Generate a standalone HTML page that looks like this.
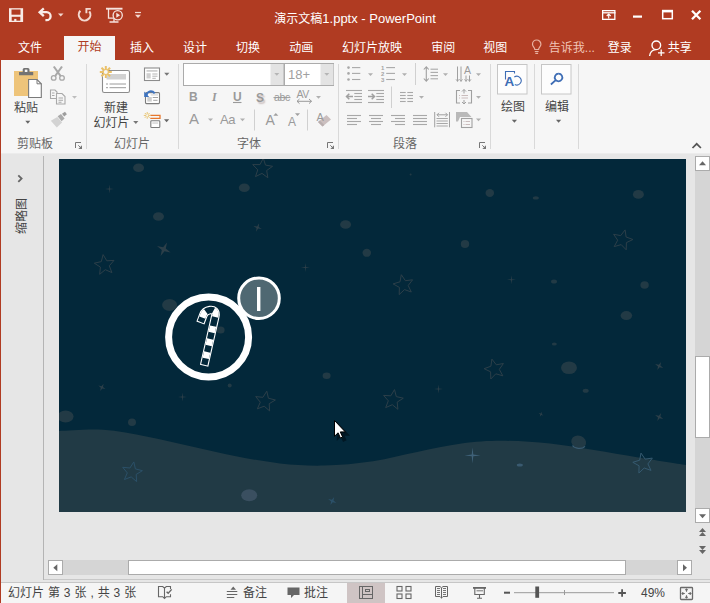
<!DOCTYPE html>
<html lang="zh-CN">
<head>
<meta charset="utf-8">
<title>演示文稿1.pptx - PowerPoint</title>
<style>
*{box-sizing:border-box;margin:0;padding:0}
html,body{width:710px;height:603px;overflow:hidden;background:#e6e6e6}
body{font-family:"Liberation Sans","Noto Sans CJK SC",sans-serif;font-size:13px;color:#444;position:relative}
.abs{position:absolute}
#titlebar{left:0;top:0;width:710px;height:60px;background:#b03b22}
#title{left:274.300px;top:10px;white-space:nowrap;color:#fff;font-size:13px;line-height:18px}
.tab{position:absolute;top:39px;height:18px;line-height:18px;color:#fff;font-size:12px;white-space:nowrap}
#tab-home{left:64px;top:36px;width:51px;height:24px;background:#f6f6f6;color:#b03b22;text-align:center;line-height:22px}
#ribbon{left:1px;top:60px;width:709px;height:94px;background:#f6f6f6;border-bottom:1px solid #ececec}
.glabel{position:absolute;top:136px;font-size:12px;line-height:16px;color:#666;white-space:nowrap}
.gsep{position:absolute;top:64px;width:1px;height:85px;background:#d9d9d9}
#work{left:1px;top:154px;width:709px;height:426px;background:#e6e6e6}
#leftpane{left:1px;top:156px;width:43px;height:424px;background:#e6e6e6;border-right:1px solid #b4b4b4}
#slide{left:59px;top:159px;width:627px;height:353px;background:#03283a;overflow:hidden}
#status{left:1px;top:583px;width:709px;height:20px;background:#f5f5f5}
.st{position:absolute;top:585px;font-size:12px;line-height:16px;color:#444;white-space:nowrap;word-spacing:0.600px}
#redleft{left:0;top:60px;width:1px;height:543px;background:#b03b22}

.btxt{position:absolute;text-align:center;font-size:12px;line-height:16px;color:#444;white-space:nowrap}
.ftxt{position:absolute;line-height:16px;color:#9a9a9a;white-space:nowrap}
#thumbtxt{left:4px;top:208px;width:36px;height:16px;line-height:16px;font-size:12px;color:#444;text-align:center;transform:rotate(-90deg);white-space:nowrap}
</style>
</head>
<body>
<div id="titlebar" class="abs"></div>
<div id="title" class="abs"><span style="font-size:12px">演示文稿</span>1.pptx - PowerPoint</div>
<div class="tab" style="left:18.1px">文件</div>
<div class="tab" id="tab-home">开始</div>
<div class="tab" style="left:130.1px">插入</div>
<div class="tab" style="left:183.1px">设计</div>
<div class="tab" style="left:236.1px">切换</div>
<div class="tab" style="left:289.3px">动画</div>
<div class="tab" style="left:342.1px">幻灯片放映</div>
<div class="tab" style="left:431.3px">审阅</div>
<div class="tab" style="left:483.3px">视图</div>
<div class="tab" style="left:548.8px;color:#f0c5b8">告诉我...</div>
<div class="tab" style="left:607.8px">登录</div>
<div class="tab" style="left:667.8px">共享</div>
<svg class="abs" style="left:0;top:0" width="710" height="60" viewBox="0 0 710 60" fill="none" stroke="#fff">
<!-- save -->
<rect x="9" y="8.200" width="14.100" height="13.800" fill="#f8ebe7" stroke="none"/>
<rect x="11.500" y="9.500" width="9" height="5.200" fill="#b03b22" stroke="none"/>
<rect x="11.700" y="16.800" width="8.600" height="3.900" fill="#b03b22" stroke="none"/>
<rect x="14.200" y="18.900" width="2.200" height="2.200" fill="#f8ebe7" stroke="none"/>
<!-- undo -->
<path d="M39.800 12.200h6.800a4 4 0 0 1 0 8h-1.200" stroke-width="2.300" stroke="#f8ebe7"/>
<path d="M43.800 8.300l-4.200 3.900l4.200 3.900" stroke-width="2.300" stroke="#f8ebe7"/>
<path d="M58 13.500h5.500l-2.750 3z" fill="#f3d8d0" stroke="none"/>
<!-- redo/repeat -->
<path d="M80.300 10.800A5.800 5.800 0 1 0 89.300 11.300" stroke-width="2.100" stroke="#f3d8d0"/>
<path d="M90.800 8.900H86.400V13.300" stroke-width="1.900" stroke="#f3d8d0"/>
<!-- slideshow -->
<g stroke="#f6e4df" stroke-width="1.300">
<path d="M106 8.700h16.500" stroke-width="1.900"/>
<path d="M108.500 8.600v9.500h5.500"/>
<path d="M114 18.500v3.500M109.500 22h9"/>
<circle cx="117.700" cy="15.300" r="4.600"/>
</g>
<path d="M116.300 12.800l3.800 2.500l-3.800 2.500z" fill="#f6e4df" stroke="none"/>
<!-- customize -->
<path d="M135 12.500h6" stroke="#f3d8d0" stroke-width="1.200"/>
<path d="M135 14.800h6l-3 3.200z" fill="#f3d8d0" stroke="none"/>
<!-- ribbon display options -->
<g stroke="#fff" stroke-width="1.300">
<rect x="602.650" y="10.650" width="12.200" height="8.700"/>
<path d="M602 12.800h13.500"/>
<path d="M608.700 18.500v-4M606.700 16l2-2l2 2" stroke-width="1.100"/>
</g>
<!-- minimize -->
<rect x="633" y="15.500" width="9" height="2.200" fill="#fff" stroke="none"/>
<!-- maximize -->
<rect x="662.700" y="11" width="9.600" height="7.700" stroke-width="1.500"/>
<rect x="662" y="9.800" width="11" height="2.600" fill="#fff" stroke="none"/>
<!-- close -->
<path d="M692 10.800l8.400 8.400M700.400 10.800l-8.400 8.400" stroke-width="2.300"/>
<!-- lightbulb -->
<g stroke="#e8b2a2" stroke-width="1.200">
<path d="M534.800 49.500c0 -2 -2.300 -2.800 -2.300 -5.300a4.200 4.200 0 0 1 8.400 0c0 2.500 -2.300 3.300 -2.300 5.300z"/>
<path d="M534.800 51.500h3.800M535.300 53.300h2.800"/>
</g>
<!-- share person -->
<g stroke="#fff" stroke-width="1.400">
<circle cx="656.300" cy="45.300" r="4.300"/>
<path d="M649.600 56c0.500 -3.800 3 -6.200 6.300 -6.400"/>
<path d="M661.200 49.500v6.500M658 52.800h6.500" stroke-width="1.300"/>
</g>
</svg>
<div id="ribbon" class="abs"></div>
<!--R1-->
<svg class="abs" style="left:0;top:60px" width="710" height="94" viewBox="0 60 710 94" fill="none">
<rect x="14" y="71" width="24" height="25" fill="#eec47a"/>
<path d="M19 75.200v-3.200h3.700v-2.400a1.600 1.600 0 0 1 1.600 -1.600h3.600a1.600 1.600 0 0 1 1.600 1.600v2.400h3.700v3.200z" fill="#737373"/>
<rect x="24.800" y="69.600" width="2.600" height="2.400" fill="#f6f6f6"/>
<path d="M28.600 79.500h8.400l4.300 4.300v13.700h-12.700z" fill="#fff" stroke="#7a7a7a" stroke-width="1.100"/>
<path d="M37 79.500v4.300h4.300" stroke="#7a7a7a" stroke-width="1"/>
<path d="M25.3 120.8h5l-2.5 3z" fill="#666" stroke="none"/>
<g stroke="#a8a8a8" stroke-width="1.500"><path d="M53.800 66.500l6.800 9.500M62 66.500l-6.800 9.500" stroke-width="2.100"/><circle cx="53.700" cy="77.900" r="2.300" stroke-width="1.300"/><circle cx="62" cy="77.900" r="2.300" stroke-width="1.300"/></g>
<g stroke="#a8a8a8" stroke-width="1.100"><path d="M56 98.500h-5.500v-8.500h4.500l2 2v1.500"/><path d="M56.500 93.500h5.500l3 3v7.500h-8.500z" fill="#f6f6f6"/>
<path d="M52 93h2.500M52 95.500h2.500M58.500 98h4.500M58.500 100.200h4.500M58.500 102.200h3"/></g>
<path d="M72 96h5l-2.5 2.8z" fill="#bdbdbd" stroke="none"/>
<path d="M50.800 120.800l6.500 -3.800l4.800 5.600l-5.300 4.800z" fill="#d3d3d3"/>
<path d="M57.600 116.200l3.400 -2.100l3.600 4.400l-3 2.700z" fill="#ababab"/>
<path d="M62 113.700l3 -1.900l1.900 2.400l-2.700 2.300z" fill="#9d9d9d"/>
<rect x="102.500" y="70.500" width="27" height="22" rx="1.800" fill="#fff" stroke="#8c8c8c" stroke-width="1.100"/>
<rect x="106.500" y="74" width="19.500" height="5.500" fill="#d2d2d2"/>
<path d="M106 84h2M109.500 84H126M106 87.700h2M109.500 87.700H126" stroke="#9a9a9a" stroke-width="1"/>
<g stroke="#eac16a" stroke-width="2"><path d="M105.800 66v12M99.800 72h12M101.500 67.700l8.600 8.600M110.100 67.700l-8.600 8.600"/></g>
<circle cx="105.800" cy="72" r="2" fill="#f6f6f6"/>
<path d="M133.2 121h5.2l-2.6 3z" fill="#777" stroke="none"/>
<rect x="144.500" y="68" width="15" height="12.500" fill="#fff" stroke="#8c8c8c" stroke-width="1.100"/>
<rect x="146.500" y="70" width="11" height="1.800" fill="#cfcfcf"/>
<rect x="146.500" y="73.200" width="4.200" height="5.300" fill="#cfcfcf"/>
<path d="M152.300 74h5.200M152.300 76.200h5.200M152.300 78.300h3.500" stroke="#aaa" stroke-width="0.900"/>
<path d="M164.2 72.8h5.2l-2.6 3z" fill="#777" stroke="none"/>
<rect x="145.500" y="92.600" width="14" height="11" rx="1" fill="#fff" stroke="#7d7d7d" stroke-width="1.100"/>
<rect x="147.300" y="97" width="4.500" height="4.600" fill="#cfcfcf"/><rect x="150.700" y="94.200" width="7.300" height="1.400" fill="#dcdcdc"/>
<path d="M152.700 97.500h5.300M153.200 100.300h4.300" stroke="#999" stroke-width="0.900"/>
<path d="M146.300 95.500c1 -4.500 5.500 -5.800 8.400 -2.200" stroke="#3e74c0" stroke-width="2"/>
<path d="M144.200 91.500v5.400h5z" fill="#3e74c0"/>
<path d="M150.300 115.400h9.700v3h-9.700" stroke="#e6772e" stroke-width="1.300"/>
<rect x="150.800" y="120.800" width="9" height="6.700" rx="0.800" fill="#fff" stroke="#7d7d7d" stroke-width="1.100"/>
<rect x="152.300" y="122.300" width="5.800" height="1.500" fill="#d6d6d6"/>
<g stroke="#e9c46f" stroke-width="1"><path d="M147.200 112v6.800M143.800 115.400h6.800M144.800 113l4.800 4.800M149.600 113l-4.800 4.800"/></g>
<circle cx="147.200" cy="115.400" r="1.100" fill="#f6f6f6"/>
<path d="M164.0 119.2h5.2l-2.6 3z" fill="#666" stroke="none"/>
<!-- ---- dialog launchers -->
<path d="M75.5 148V142.500H81" stroke="#777" stroke-width="1"/><path d="M78.300 145.300l3.200 3.200" stroke="#777" stroke-width="1"/><path d="M82 145.300V149H78.300z" fill="#777"/>
<path d="M327.5 148V142.500H333" stroke="#777" stroke-width="1"/><path d="M330.300 145.300l3.200 3.200" stroke="#777" stroke-width="1"/><path d="M334 145.300V149H330.300z" fill="#777"/>
<path d="M479.5 148V142.500H485" stroke="#777" stroke-width="1"/><path d="M482.300 145.300l3.200 3.200" stroke="#777" stroke-width="1"/><path d="M486 145.300V149H482.300z" fill="#777"/>
<path d="M692.500 148l4.200 -4.200l4.200 4.200" stroke="#555" stroke-width="1.700"/>
</svg>
<!--/R1-->
<!--R2-->
<svg class="abs" style="left:0;top:60px" width="710" height="94" viewBox="0 60 710 94" fill="none">
<rect x="183.500" y="63.500" width="100" height="22" fill="#fff" stroke="#ababab"/>
<rect x="270.500" y="64" width="13" height="21" fill="#e3e3e3"/>
<rect x="284.500" y="63.500" width="49" height="22" fill="#fff" stroke="#ababab"/>
<rect x="320.500" y="64" width="13" height="21" fill="#e3e3e3"/>
<path d="M274.3 73h5l-2.5 2.8z" fill="#b5b5b5" stroke="none"/>
<path d="M324.3 73h5l-2.5 2.8z" fill="#b5b5b5" stroke="none"/>
<path d="M233 102.5H241.5" stroke="#9a9a9a" stroke-width="1.1"/>
<path d="M273.5 97.6H290.5" stroke="#9a9a9a" stroke-width="1"/>
<path d="M297 101.300h14.500M299.500 99l-2.500 2.300l2.500 2.300M309 99l2.500 2.300l-2.500 2.300" stroke="#9a9a9a" stroke-width="1"/>
<path d="M316 96h5l-2.5 2.8z" fill="#b0b0b0" stroke="none"/>
<path d="M208 118.5h5l-2.5 2.8z" fill="#b0b0b0" stroke="none"/>
<path d="M240 118.5h5l-2.5 2.8z" fill="#b0b0b0" stroke="none"/>
<path d="M254.500 109.500V130.500M307.500 109.500V130.500" stroke="#d0d0d0"/>
<path d="M273.300 115.800h5l-2.500 -2.800z" fill="#a0a0a0"/>
<path d="M295 113.200h5l-2.500 2.800z" fill="#a0a0a0"/>
<path d="M318 122l8.500 -7l4.500 4.500l-8.500 7z" fill="#cbbfbf"/>
<path d="M318 122l1.800 -1.500l4.500 4.500l-1.800 1.500z" fill="#b9aeae"/>
<circle cx="348.500" cy="67.6" r="1.300" fill="#a8a8a8"/>
<path d="M352 67.6H360.3" stroke="#a8a8a8" stroke-width="1.1"/>
<circle cx="348.500" cy="73.4" r="1.300" fill="#a8a8a8"/>
<path d="M352 73.4H360.3" stroke="#a8a8a8" stroke-width="1.1"/>
<circle cx="348.500" cy="79.5" r="1.300" fill="#a8a8a8"/>
<path d="M352 79.5H360.3" stroke="#a8a8a8" stroke-width="1.1"/>
<path d="M368 73.3h5l-2.5 2.8z" fill="#b0b0b0" stroke="none"/>
<path d="M386.2 67.6H395" stroke="#a8a8a8" stroke-width="1.1"/>
<path d="M386.2 73.4H395" stroke="#a8a8a8" stroke-width="1.1"/>
<path d="M386.2 79.5H395" stroke="#a8a8a8" stroke-width="1.1"/>
<path d="M402 73.3h5l-2.5 2.8z" fill="#b0b0b0" stroke="none"/>
<path d="M415.500 63V85M391.500 86.500V108" stroke="#d0d0d0"/>
<path d="M426.300 67v14M423.800 69.500l2.500 -2.700l2.500 2.700M423.800 78.500l2.500 2.700l2.500 -2.700" stroke="#a0a0a0" stroke-width="1.100"/>
<path d="M430.5 69.2H438" stroke="#a8a8a8" stroke-width="1.1"/>
<path d="M430.5 72.4H438" stroke="#a8a8a8" stroke-width="1.1"/>
<path d="M430.5 75.6H438" stroke="#a8a8a8" stroke-width="1.1"/>
<path d="M430.5 78.8H438" stroke="#a8a8a8" stroke-width="1.1"/>
<path d="M443 73.3h5l-2.5 2.8z" fill="#b0b0b0" stroke="none"/>
<path d="M457.500 66.500V81.500M461 66.500V81.500M466 75.500V81.500M469.500 75.500V81.500" stroke="#a0a0a0" stroke-width="1"/>
<path d="M456 79.300l1.500 2l1.500 -2M459.500 79.300l1.500 2l1.500 -2M464.500 79.300l1.500 2l1.500 -2M468 79.300l1.500 2l1.500 -2" stroke="#a0a0a0" stroke-width="0.900"/>
<path d="M476 73.3h5l-2.5 2.8z" fill="#b0b0b0" stroke="none"/>
<path d="M346 90.5H362" stroke="#a8a8a8" stroke-width="1.1"/><path d="M346 102.5H362" stroke="#a8a8a8" stroke-width="1.1"/><path d="M354.3 93.5H362" stroke="#a8a8a8" stroke-width="1.1"/><path d="M354.3 96.5H362" stroke="#a8a8a8" stroke-width="1.1"/><path d="M354.3 99.5H362" stroke="#a8a8a8" stroke-width="1.1"/><path d="M346.5 96.500h6.500M349.3 93.700l-2.800 2.800l2.800 2.800" stroke="#a0a0a0" stroke-width="1.500"/>
<path d="M368 90.5H384" stroke="#a8a8a8" stroke-width="1.1"/><path d="M368 102.5H384" stroke="#a8a8a8" stroke-width="1.1"/><path d="M376.3 93.5H384" stroke="#a8a8a8" stroke-width="1.1"/><path d="M376.3 96.5H384" stroke="#a8a8a8" stroke-width="1.1"/><path d="M376.3 99.5H384" stroke="#a8a8a8" stroke-width="1.1"/><path d="M368 96.500h6.500M371.7 93.700l2.800 2.800l-2.800 2.800" stroke="#a0a0a0" stroke-width="1.500"/>
<path d="M400 92.5H405.7" stroke="#a8a8a8" stroke-width="1.1"/>
<path d="M407.3 92.5H413" stroke="#a8a8a8" stroke-width="1.1"/>
<path d="M400 95.5H405.7" stroke="#a8a8a8" stroke-width="1.1"/>
<path d="M407.3 95.5H413" stroke="#a8a8a8" stroke-width="1.1"/>
<path d="M400 98.5H405.7" stroke="#a8a8a8" stroke-width="1.1"/>
<path d="M407.3 98.5H413" stroke="#a8a8a8" stroke-width="1.1"/>
<path d="M400 101.5H405.7" stroke="#a8a8a8" stroke-width="1.1"/>
<path d="M407.3 101.5H413" stroke="#a8a8a8" stroke-width="1.1"/>
<path d="M419 96h5l-2.5 2.8z" fill="#b0b0b0" stroke="none"/>
<path d="M460 90.500h-3.500v12.500h3.500M468 90.500h3.500v12.500h-3.500" stroke="#a0a0a0" stroke-width="1.100"/>
<path d="M464 89.500v4M462 91.500l2 -2l2 2M464 104v-4M462 102l2 2l2 -2" stroke="#a0a0a0" stroke-width="1"/>
<path d="M459 95.500h1M461.500 95.500h6.500M459 98h1M461.500 98h6.500" stroke="#c5b5b5" stroke-width="0.900"/>
<path d="M476 96h5l-2.5 2.8z" fill="#b0b0b0" stroke="none"/>
<path d="M347 115.5H361" stroke="#a8a8a8" stroke-width="1.1"/><path d="M347 118.5H357" stroke="#a8a8a8" stroke-width="1.1"/><path d="M347 121.5H361" stroke="#a8a8a8" stroke-width="1.1"/><path d="M347 124.5H357" stroke="#a8a8a8" stroke-width="1.1"/>
<path d="M369 115.5H383" stroke="#a8a8a8" stroke-width="1.1"/><path d="M371 118.5H381" stroke="#a8a8a8" stroke-width="1.1"/><path d="M369 121.5H383" stroke="#a8a8a8" stroke-width="1.1"/><path d="M371 124.5H381" stroke="#a8a8a8" stroke-width="1.1"/>
<path d="M391 115.5H405" stroke="#a8a8a8" stroke-width="1.1"/><path d="M395 118.5H405" stroke="#a8a8a8" stroke-width="1.1"/><path d="M391 121.5H405" stroke="#a8a8a8" stroke-width="1.1"/><path d="M395 124.5H405" stroke="#a8a8a8" stroke-width="1.1"/>
<path d="M413 115.5H427" stroke="#a8a8a8" stroke-width="1.1"/><path d="M413 118.5H427" stroke="#a8a8a8" stroke-width="1.1"/><path d="M413 121.5H427" stroke="#a8a8a8" stroke-width="1.1"/><path d="M413 124.5H427" stroke="#a8a8a8" stroke-width="1.1"/>
<path d="M434.700 112V127.300M449.500 112V127.300" stroke="#a0a0a0" stroke-width="1"/>
<path d="M437 114.800h10.500M439 112.800l-2 2l2 2M445.500 112.800l2 2l-2 2" stroke="#a0a0a0" stroke-width="1"/>
<path d="M436.5 118.5H447.8" stroke="#a8a8a8" stroke-width="1"/>
<path d="M436.5 121H447.8" stroke="#a8a8a8" stroke-width="1"/>
<path d="M436.5 123.5H447.8" stroke="#a8a8a8" stroke-width="1"/>
<path d="M436.5 126H447.8" stroke="#a8a8a8" stroke-width="1"/>
<path d="M456 112h11l4.500 5h-11.500l-2 4.500h-2z" fill="#b9b9b9"/>
<rect x="461.500" y="118.500" width="10.500" height="9" fill="#f6f6f6" stroke="#a0a0a0" stroke-width="1.100"/>
<path d="M463.500 121.500h1M465.500 121.500h4.500M463.500 124.500h1M465.500 124.500h4.500" stroke="#c5b5b5" stroke-width="0.900"/>
<path d="M476 118.5h5l-2.5 2.8z" fill="#b0b0b0" stroke="none"/>
<rect x="497.500" y="64.500" width="29.500" height="29.500" fill="#fdfdfd" stroke="#c6c6c6"/>
<rect x="541.500" y="64.500" width="29.500" height="29.500" fill="#fdfdfd" stroke="#c6c6c6"/>
<path d="M505.500 79.500v-8h9v2" stroke="#3e6db5" stroke-width="1.100"/>
<path d="M514.300 77a4.400 4.400 0 1 1 0.500 7.600" stroke="#3e6db5" stroke-width="1.100"/>
<path d="M558.500 73.700a3.800 3.800 0 1 0 0.100 0M555.700 80.200l-4.800 4.300" stroke="#3e6db5" stroke-width="1.800"/>
<path d="M511.8 119.7h5.2l-2.6 3z" fill="#666" stroke="none"/>
<path d="M556 119.7h5.2l-2.6 3z" fill="#666" stroke="none"/>
</svg>
<!--/R2-->

<div class="btxt" style="left:6px;top:100px;width:40px">粘贴</div>
<div class="btxt" style="left:86px;top:100px;width:60px">新建</div>
<div class="btxt" style="left:83px;top:114.500px;width:57px">幻灯片</div>
<div class="btxt" style="left:492.500px;top:99px;width:41px">绘图</div>
<div class="btxt" style="left:536.500px;top:99px;width:41px">编辑</div>
<div class="ftxt" style="left:288px;top:67px;font-size:13px;color:#a0a0a0">18+</div>
<div class="ftxt" style="left:189px;top:89px;font-weight:bold;font-size:12px">B</div>
<div class="ftxt" style="left:212px;top:89px;font-weight:bold;font-style:italic;font-size:12px;font-family:'Liberation Serif',serif">I</div>
<div class="ftxt" style="left:233px;top:89px;font-weight:bold;font-size:12px">U</div>
<div class="ftxt" style="left:256px;top:89.500px;font-weight:bold;font-size:12px;text-shadow:1.500px 1.500px 1.500px #cbbfbf">S</div>
<div class="ftxt" style="left:274px;top:89px;font-size:10.500px;letter-spacing:-0.400px">abc</div>
<div class="ftxt" style="left:296.500px;top:85.500px;font-size:10.500px;letter-spacing:-0.500px">AV</div>
<div class="ftxt" style="left:189px;top:110.500px;font-size:15px">A</div>
<div class="ftxt" style="left:220px;top:112px;font-size:13px;letter-spacing:-0.500px">Aa</div>
<div class="ftxt" style="left:265.500px;top:112px;font-size:14px">A</div>
<div class="ftxt" style="left:288px;top:114px;font-size:12px">A</div>
<div class="ftxt" style="left:316.500px;top:108.500px;font-size:11px">A</div>
<div class="ftxt" style="left:381px;top:65px;font-size:6px;line-height:6px;font-weight:bold;width:6px;color:#a4a4a4">1<br>2<br>3</div>
<div class="ftxt" style="left:464px;top:61.500px;font-size:10.500px;">A</div>
<div class="ftxt" style="left:504.600px;top:73.500px;font-size:13.500px;font-weight:bold;color:#3e6db5">A</div>
<div class="glabel" style="left:17px">剪贴板</div>
<div class="glabel" style="left:114px">幻灯片</div>
<div class="glabel" style="left:237px">字体</div>
<div class="glabel" style="left:393px">段落</div>
<div class="gsep" style="left:86px"></div>
<div class="gsep" style="left:178px"></div>
<div class="gsep" style="left:338px"></div>
<div class="gsep" style="left:490px"></div>
<div class="gsep" style="left:534px"></div>
<div class="gsep" style="left:578px"></div>
<div id="work" class="abs"></div>
<div id="leftpane" class="abs"></div>
<!--SLIDE-->
<svg class="abs" style="left:59px;top:159px" width="627" height="353" viewBox="59 159 627 353" fill="none">
<rect x="59" y="159" width="627" height="353" fill="#03283a"/>
<ellipse cx="138.6" cy="167.8" rx="5.5" ry="4.3" fill="#223a45"/>
<ellipse cx="244.3" cy="187.7" rx="5.5" ry="4.3" fill="#223a45"/>
<ellipse cx="158.5" cy="216.5" rx="5.5" ry="4.3" fill="#223a45"/>
<ellipse cx="345.6" cy="224.5" rx="5.5" ry="4.3" fill="#223a45"/>
<ellipse cx="366.8" cy="252.8" rx="4.3" ry="4" fill="#223a45"/>
<ellipse cx="169.6" cy="305" rx="7.5" ry="6" fill="#223a45"/>
<ellipse cx="410.6" cy="174.5" rx="1" ry="1" fill="#223a45"/>
<ellipse cx="489.8" cy="193" rx="4.3" ry="4" fill="#223a45"/>
<ellipse cx="535.8" cy="197.9" rx="3" ry="1.6" fill="#223a45"/>
<ellipse cx="638.4" cy="194.4" rx="5.5" ry="4.3" fill="#223a45"/>
<ellipse cx="465" cy="244" rx="4.2" ry="4" fill="#223a45"/>
<ellipse cx="554" cy="281.5" rx="3" ry="2" fill="#223a45"/>
<ellipse cx="644.6" cy="285" rx="4.2" ry="3.8" fill="#223a45"/>
<ellipse cx="626.4" cy="315.6" rx="5.8" ry="4.5" fill="#223a45"/>
<ellipse cx="229.7" cy="385.5" rx="2" ry="2" fill="#223a45"/>
<ellipse cx="326.6" cy="375.8" rx="4" ry="3.2" fill="#223a45"/>
<ellipse cx="65.6" cy="416.5" rx="8" ry="6" fill="#223a45"/>
<ellipse cx="132" cy="422.2" rx="4" ry="3.8" fill="#223a45"/>
<ellipse cx="554.3" cy="344" rx="2.5" ry="1.5" fill="#223a45"/>
<ellipse cx="569" cy="367.8" rx="8" ry="6.3" fill="#223a45"/>
<ellipse cx="585.7" cy="390.8" rx="3" ry="2" fill="#223a45"/>
<ellipse cx="220.600" cy="330" rx="4" ry="3.600" fill="#223a45"/>
<polygon points="263.3,158.2 265.5,165.1 272.6,166.3 266.7,170.5 267.8,177.7 262.0,173.4 255.5,176.6 257.8,169.8 252.7,164.6 260.0,164.6" stroke="#2c3f49" stroke-width="1"/>
<polygon points="103.1,254.6 106.8,260.8 114.0,260.4 109.3,265.8 111.9,272.6 105.3,269.7 99.7,274.3 100.4,267.1 94.3,263.2 101.3,261.6" stroke="#2c3f49" stroke-width="1"/>
<polygon points="625.1,229.9 626.1,237.0 632.9,239.5 626.4,242.6 626.2,249.8 621.2,244.6 614.2,246.6 617.7,240.2 613.6,234.3 620.7,235.6" stroke="#2c3f49" stroke-width="1"/>
<polygon points="401.3,274.7 405.4,280.7 412.6,279.8 408.2,285.5 411.3,292.0 404.5,289.6 399.2,294.6 399.4,287.4 393.1,283.9 400.0,281.8" stroke="#2c3f49" stroke-width="1"/>
<polygon points="266.8,391.2 268.4,398.2 275.4,400.0 269.2,403.7 269.6,410.9 264.2,406.2 257.4,408.8 260.3,402.2 255.7,396.6 262.9,397.3" stroke="#2c3f49" stroke-width="1"/>
<polygon points="491.9,359.1 496.3,364.8 503.4,363.5 499.3,369.4 502.8,375.8 495.8,373.8 490.8,379.0 490.6,371.8 484.1,368.7 490.9,366.2" stroke="#2c3f49" stroke-width="1"/>
<polygon points="394.5,389.6 396.3,396.6 403.3,398.2 397.2,402.1 397.9,409.3 392.3,404.7 385.7,407.6 388.3,400.8 383.6,395.4 390.8,395.8" stroke="#2c3f49" stroke-width="1"/>
<polygon points="259.1,223.3 258.7,227.0 261.8,229.0 258.1,228.6 256.1,231.7 256.5,228.0 253.4,226.0 257.1,226.4" fill="#2c3f49"/>
<polygon points="167.0,242.4 165.8,248.5 170.6,252.4 164.5,251.2 160.6,256.0 161.8,249.9 157.0,246.0 163.1,247.2" fill="#2c3f49"/>
<polygon points="103.6,383.7 103.0,386.9 105.5,389.0 102.3,388.4 100.2,390.9 100.8,387.7 98.3,385.6 101.5,386.2" fill="#2c3f49"/>
<polygon points="661.1,361.9 660.4,365.6 663.3,367.9 659.6,367.2 657.3,370.1 658.0,366.4 655.1,364.1 658.8,364.8" fill="#2c3f49"/>
<polygon points="661.1,412.9 660.4,416.6 663.3,418.9 659.6,418.2 657.3,421.1 658.0,417.4 655.1,415.1 658.8,415.8" fill="#2c3f49"/>
<polygon points="542.2,411.8 541.7,414.0 543.5,415.5 541.3,415.0 539.8,416.8 540.3,414.6 538.5,413.1 540.7,413.6" fill="#2c3f49"/>
<polygon points="109.4,184.5 109.9,188.5 113.9,189.0 109.9,189.5 109.4,193.5 108.9,189.5 104.9,189.0 108.9,188.5" fill="#2c3f49"/>
<polygon points="305.4,262.9 305.9,266.9 309.9,267.4 305.9,267.9 305.4,271.9 304.9,267.9 300.9,267.4 304.9,266.9" fill="#2c3f49"/>
<polygon points="511.4,275.2 511.9,279.2 515.9,279.7 511.9,280.2 511.4,284.2 510.9,280.2 506.9,279.7 510.9,279.2" fill="#2c3f49"/>
<polygon points="182.4,392.5 182.9,396.5 186.9,397.0 182.9,397.5 182.4,401.5 181.9,397.5 177.9,397.0 181.9,396.5" fill="#2c3f49"/>
<polygon points="438.5,384.5 439.0,388.5 443.0,389.0 439.0,389.5 438.5,393.5 438.0,389.5 434.0,389.0 438.0,388.5" fill="#2c3f49"/>
<ellipse cx="578.700" cy="442" rx="7.600" ry="6.300" transform="rotate(20 578.700 442)" fill="#223a45"/>
<path d="M59 431 C66.3 430.8 88.2 428.8 103 429.8 C117.8 430.8 132.7 434.0 147.5 436.8 C162.3 439.6 176.9 443.4 191.7 446.6 C206.4 449.9 221.3 453.5 236 456.3 C250.7 459.1 265.3 461.8 280 463.4 C294.7 464.9 308.5 466.0 324 465.6 C339.5 465.2 357.5 463.5 373 461.2 C388.5 458.9 402.4 454.8 417.2 451.9 C431.9 448.9 447.5 445.4 461.5 443.5 C475.5 441.6 486.6 440.8 501.3 440.8 C516.0 440.8 534.5 441.9 550 443.5 C565.5 445.1 579.3 447.8 594 450.1 C608.7 452.5 623.1 455.1 638.4 457.6 C653.7 460.1 678.1 463.9 686 465.1 V512 H59 Z" fill="#213a45"/>
<polygon points="133.8,461.9 135.4,468.9 142.4,470.7 136.2,474.4 136.6,481.6 131.2,476.9 124.4,479.5 127.3,472.9 122.7,467.3 129.9,468.0" stroke="#2b5068" stroke-width="1"/>
<polygon points="641.0,453.1 645.1,459.1 652.3,458.1 647.9,463.9 651.0,470.4 644.2,468.0 638.9,473.0 639.1,465.8 632.8,462.3 639.7,460.2" stroke="#365a70" stroke-width="1"/>
<ellipse cx="249.2" cy="495.2" rx="8" ry="6" fill="#3a4f60"/>
<path d="M572.500 445.500c2 3.200 9.500 4 12.500 0.800" stroke="#3a5c72" stroke-width="1.200"/>
<polygon points="334.2,496.9 333.5,500.6 336.4,502.9 332.7,502.2 330.4,505.1 331.1,501.4 328.2,499.1 331.9,499.8" fill="#2b5068"/>
<polygon points="472.5,447.4 473.3,454.6 480.5,455.4 473.3,456.2 472.5,463.4 471.7,456.2 464.5,455.4 471.7,454.6" fill="#3f6178"/>
<ellipse cx="519.8" cy="465" rx="3" ry="1.500" fill="#3a5a70"/>
<circle cx="208.600" cy="337" r="40" stroke="#fff" stroke-width="7"/>
<circle cx="259" cy="298.200" r="20.300" fill="#4f6872" stroke="#fff" stroke-width="3"/>
<rect x="257" y="287" width="3.400" height="24" fill="#fff"/>
<g>
<path d="M204.1 365.7 L215.2 316.8 C216.6 311.3 213.2 309.6 209.9 310.1 C206.4 310.6 204.4 312.2 203.3 315.2 L200.4 322.9" stroke="#fff" stroke-width="8.600" stroke-linejoin="round"/>
<path d="M204.3 364.7 L215.2 316.8 C216.6 311.3 213.2 309.6 209.9 310.1 C206.4 310.6 204.4 312.2 203.3 315.2 L200.7 322" stroke="#03283a" stroke-width="6.400" stroke-linejoin="round"/>
<path d="M204.3 364.7 L215.2 316.8 C216.6 311.3 213.2 309.6 209.9 310.1 C206.4 310.6 204.4 312.2 203.3 315.2 L200.7 322" stroke="#fff" stroke-width="6.400" stroke-dasharray="0 6.500 6.500 6.700 6.700 6.600 6.600 9.400 7 8 7 30"/>
</g>
<path d="M337.500 423.500v15.800l3.600 -3.500l2.300 5.200l2.200 -1l-2.300 -5.100h5z" fill="#00121c" stroke="#00121c" stroke-width="1.500" opacity="0.750"/>
<path d="M334.500 420.500v15.800l3.600 -3.500l2.300 5.200l2.200 -1l-2.300 -5.100h5z" fill="#fff" stroke="#000" stroke-width="1" stroke-linejoin="round"/>
</svg>
<!--/SLIDE-->
<div id="status" class="abs"></div>
<!--WS-->
<svg class="abs" style="left:0;top:154px" width="710" height="449" viewBox="0 154 710 449" fill="none">
<path d="M18.300 175.300l3.300 3.300l-3.300 3.300" stroke="#666" stroke-width="1.800"/>
<rect x="695" y="156" width="15" height="366" fill="#d5d5d5"/>
<rect x="695.500" y="156.500" width="14" height="14" fill="#fff" stroke="#ababab"/>
<path d="M699 165.200h7l-3.500 -4z" fill="#666"/>
<rect x="695.500" y="356.500" width="14" height="81" fill="#fff" stroke="#ababab"/>
<rect x="695.500" y="508.500" width="14" height="14" fill="#fff" stroke="#ababab"/>
<path d="M699 514.300h7l-3.500 4z" fill="#666"/>
<path d="M699 532h7l-3.500 -4zM699 536h7l-3.500 -4z" fill="#666"/>
<path d="M699 546h7l-3.500 4zM699 550h7l-3.500 4z" fill="#666"/>
<rect x="48" y="560" width="644" height="15" fill="#d5d5d5"/>
<rect x="48.500" y="560.500" width="14" height="14" fill="#fff" stroke="#ababab"/>
<path d="M57.300 564.300v7l-4 -3.500z" fill="#666"/>
<rect x="128.500" y="560.500" width="497" height="14" fill="#fff" stroke="#ababab"/>
<rect x="677.500" y="560.500" width="14" height="14" fill="#fff" stroke="#ababab"/>
<path d="M683 564.300v7l4 -3.500z" fill="#666"/>
<path d="M44 579.500H710" stroke="#c8c8c8"/>
<path d="M1 582.500H710" stroke="#c6c6c6"/>
<g stroke="#666" stroke-width="1.100"><path d="M164.500 588v10.500M164.500 588.200l-1.800 -1.700h-4.200v10.200h4.200l1.800 1.800l1.800 -1.800h4.200v-2.500M170.500 589v-2.500h-4.200l-1.800 1.700"/><path d="M166.600 591.700l1.600 1.600l3.500 -3.900" stroke-width="1.400"/></g>
<path d="M230.500 589.800h5.500l-2.750 -3.200z" fill="#666"/>
<path d="M226.800 591.500h10.500M226.800 594.500h10.500M226.800 597.500h7.500" stroke="#666" stroke-width="1"/>
<path d="M287.500 587.500h12v7.500h-5.500l-3 3v-3h-3.500z" fill="#666"/>
<rect x="347" y="583" width="38" height="20" fill="#cfc4c4"/>
<g stroke="#666" stroke-width="1"><rect x="359.500" y="586.500" width="13" height="12"/><path d="M362.500 587v11M362.500 594.500h10"/><rect x="365.500" y="589.500" width="4" height="2"/></g>
<g stroke="#666" stroke-width="1.100"><rect x="397" y="586.500" width="5" height="4.500"/><rect x="406" y="586.500" width="5" height="4.500"/><rect x="397" y="594" width="5" height="4.500"/><rect x="406" y="594" width="5" height="4.500"/></g>
<g stroke="#666" stroke-width="1"><path d="M441.500 587.800l-1.500 -1.300h-4.500v10h4.500l1.500 1.500l1.500 -1.500h4.500v-10h-4.500zM441.500 587.800v10.700"/><path d="M437 588.500h3M437 590.500h3M437 592.500h3M437 594.500h3M443 588.500h3M443 590.500h3M443 592.500h3M443 594.500h3" stroke-width="0.900"/></g>
<g stroke="#666" stroke-width="1.100"><path d="M473 587.900h13" stroke-width="1.800"/><path d="M474.800 588v6.500h9.500v-6.500"/><path d="M476.500 590.800h6.500" stroke-width="0.900"/><path d="M479.500 594.500v4M477 598.300h5"/></g>
<rect x="504" y="591.700" width="6" height="2" fill="#555"/>
<path d="M514 592.700H614" stroke="#9a9a9a" stroke-width="1"/>
<path d="M564.500 590V595" stroke="#9a9a9a" stroke-width="1"/>
<rect x="535.300" y="586.500" width="3.800" height="11.300" fill="#555"/>
<path d="M618.300 593h7.600M622.100 589.200v7.600" stroke="#555" stroke-width="1.800"/>
<g stroke="#6a6a6a" stroke-width="1.100"><rect x="680.500" y="587.500" width="12" height="12" rx="0.800" stroke-width="1.300"/><path d="M686.500 588.500v3.300M685 589.800h3M686.500 595.200v3.300M685 597.200h3M681.500 593.500h3.300M682.800 592v3M688.200 593.500h3.300M690.200 592v3"/></g>
</svg>
<!--/WS-->
<div class="st" style="left:8px">幻灯片 第 3 张 , 共 3 张</div>
<div class="st" style="left:243px">备注</div>
<div class="st" style="left:304px">批注</div>
<div class="st" style="left:641px">49%</div>
<div class="abs" id="thumbtxt">缩略图</div>
<div id="redleft" class="abs"></div>
</body>
</html>
